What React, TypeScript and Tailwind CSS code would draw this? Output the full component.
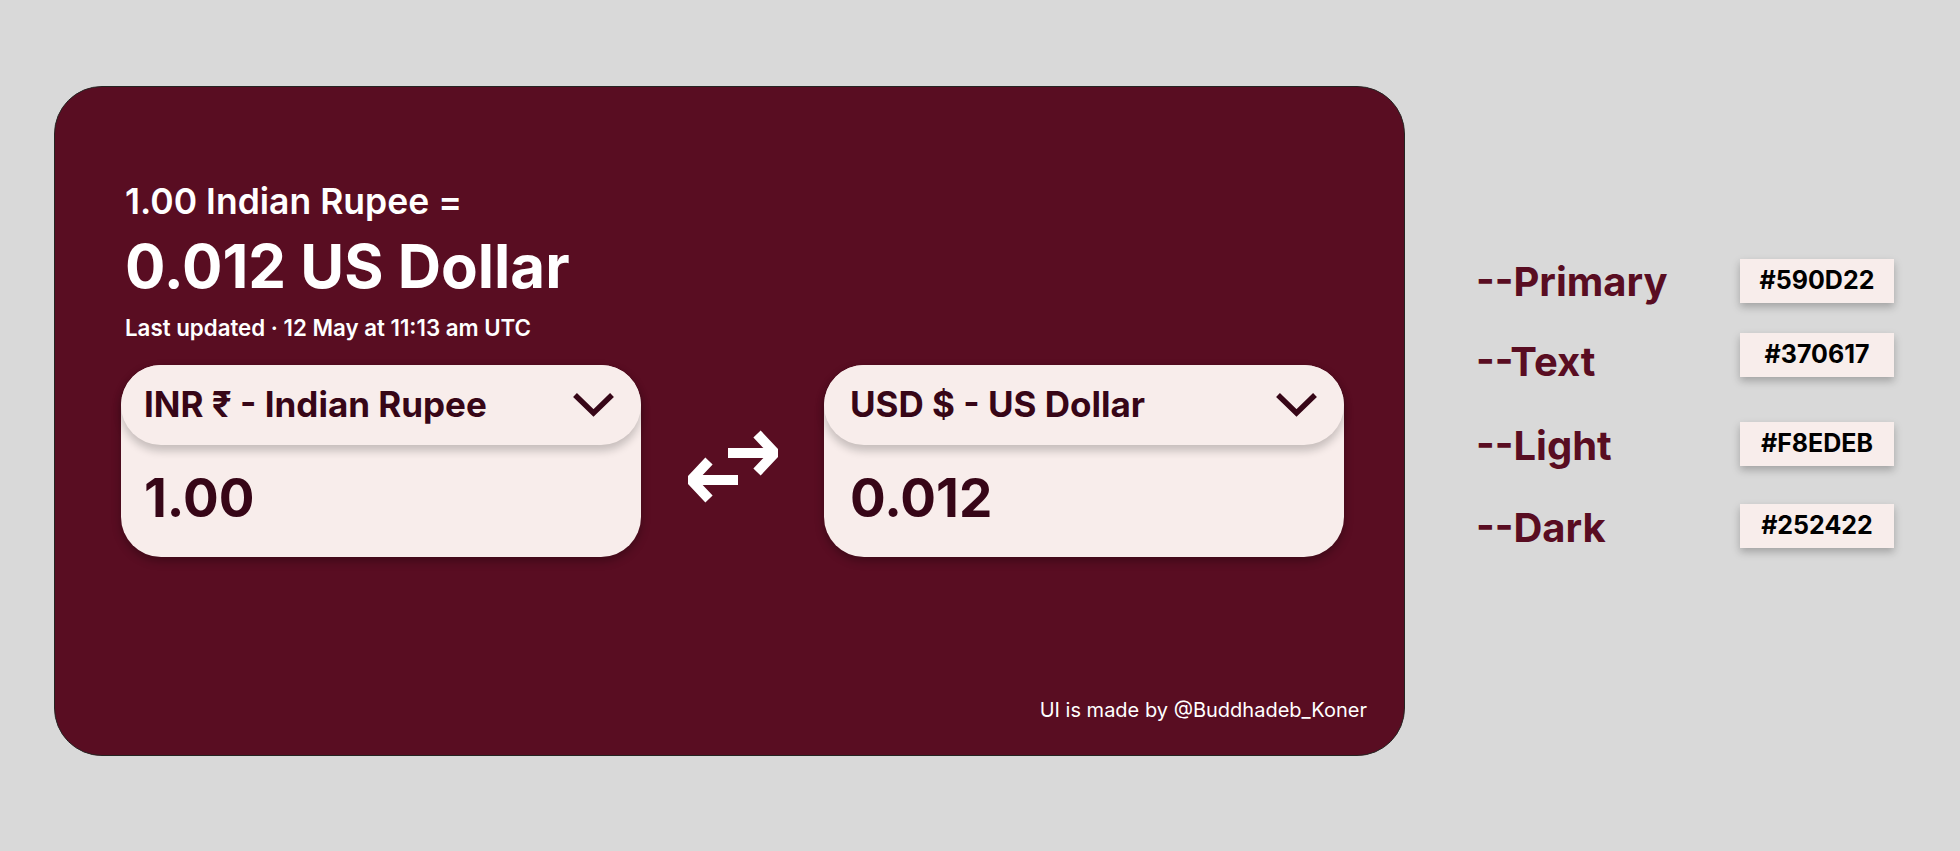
const font = { fontFamily: "Inter, 'Noto Sans', sans-serif" };

const Chevron = () => (
  <svg width="43" height="25" viewBox="0 0 43 25" fill="none">
    <polyline
      points="3,3 21.5,21 40,3"
      stroke="#370617"
      strokeWidth="5.5"
      strokeLinejoin="miter"
    />
  </svg>
);

const SwapArrows = () => (
  <svg width="90" height="74" viewBox="0 0 90 74" fill="none">
    <line x1="40" y1="23" x2="84" y2="23" stroke="white" strokeWidth="10" />
    <polyline
      points="69,4 87,23 69,42"
      stroke="white"
      strokeWidth="10"
      strokeLinejoin="miter"
    />
    <line x1="6" y1="50" x2="50" y2="50" stroke="white" strokeWidth="10" />
    <polyline
      points="21,31 3,50 21,69"
      stroke="white"
      strokeWidth="10"
      strokeLinejoin="miter"
    />
  </svg>
);

interface CurrencyBoxProps {
  label: string;
  value: string;
  inset: string;
}

const CurrencyBox = ({ label, value, inset }: CurrencyBoxProps) => (
  <div className="flex h-[192px] w-[520px] flex-col rounded-[40px] bg-[#F8EDEB] text-[#370617] shadow-[0_4px_10px_rgba(0,0,0,0.3)]">
    <div
      className={`flex h-[80px] items-center justify-between rounded-[40px] bg-[#F8EDEB] ${inset} pr-[26px] shadow-[0_6px_8px_rgba(0,0,0,0.2)]`}
    >
      <span className="text-[35px] font-bold leading-none">{label}</span>
      <Chevron />
    </div>
    <div className={`${inset} pt-[27px] text-[53px] font-bold leading-none`}>
      {value}
    </div>
  </div>
);

const swatches = [
  { name: "--Primary", hex: "#590D22" },
  { name: "--Text", hex: "#370617" },
  { name: "--Light", hex: "#F8EDEB" },
  { name: "--Dark", hex: "#252422" },
];

const labelGaps = ["mt-[176px]", "mt-[40px]", "mt-[44px]", "mt-[42px]"];
const swatchGaps = ["mt-[173px]", "mt-[30px]", "mt-[45px]", "mt-[38px]"];

export default function App() {
  return (
    <div
      className="flex min-h-[851px] w-[1960px] items-start bg-[#D9D9D9] pl-[54px] pt-[86px]"
      style={font}
    >
      <div className="flex h-[670px] w-[1351px] flex-col rounded-[48px] border border-[#252422] bg-[#590D22] pl-[66px] pt-[97px] text-white">
        <div className="pl-1 text-[35.5px] font-semibold leading-none">
          1.00 Indian Rupee =
        </div>
        <div className="mt-[16px] pl-1 text-[60px] font-bold leading-none">
          0.012 US Dollar
        </div>
        <div className="mt-[21px] pl-1 text-[22.3px] font-semibold leading-none">
          Last updated · 12 May at 11:13 am UTC
        </div>
        <div className="mt-[26px] flex items-center">
          <CurrencyBox
            label="INR ₹ - Indian Rupee"
            value="1.00"
            inset="pl-[23px]"
          />
          <div className="flex w-[183px] justify-center pt-[12px]">
            <SwapArrows />
          </div>
          <CurrencyBox
            label="USD $ - US Dollar"
            value="0.012"
            inset="pl-[26px]"
          />
        </div>
        <div className="mb-[35px] mr-[37px] mt-auto self-end text-[20px] leading-none">
          UI is made by @Buddhadeb_Koner
        </div>
      </div>

      <div className="ml-[71px] flex flex-col">
        {swatches.map((s, i) => (
          <div
            key={s.name}
            className={`${labelGaps[i]} text-[40px] font-bold leading-none text-[#590D22]`}
          >
            {s.name}
          </div>
        ))}
      </div>

      <div className="ml-auto mr-[66px] flex flex-col">
        {swatches.map((s, i) => (
          <div
            key={s.hex}
            className={`${swatchGaps[i]} flex h-[44px] w-[154px] items-center justify-center bg-[#F8EDEB] text-[25px] font-bold text-black shadow-[0_4px_8px_rgba(0,0,0,0.25)]`}
          >
            {s.hex}
          </div>
        ))}
      </div>
    </div>
  );
}
